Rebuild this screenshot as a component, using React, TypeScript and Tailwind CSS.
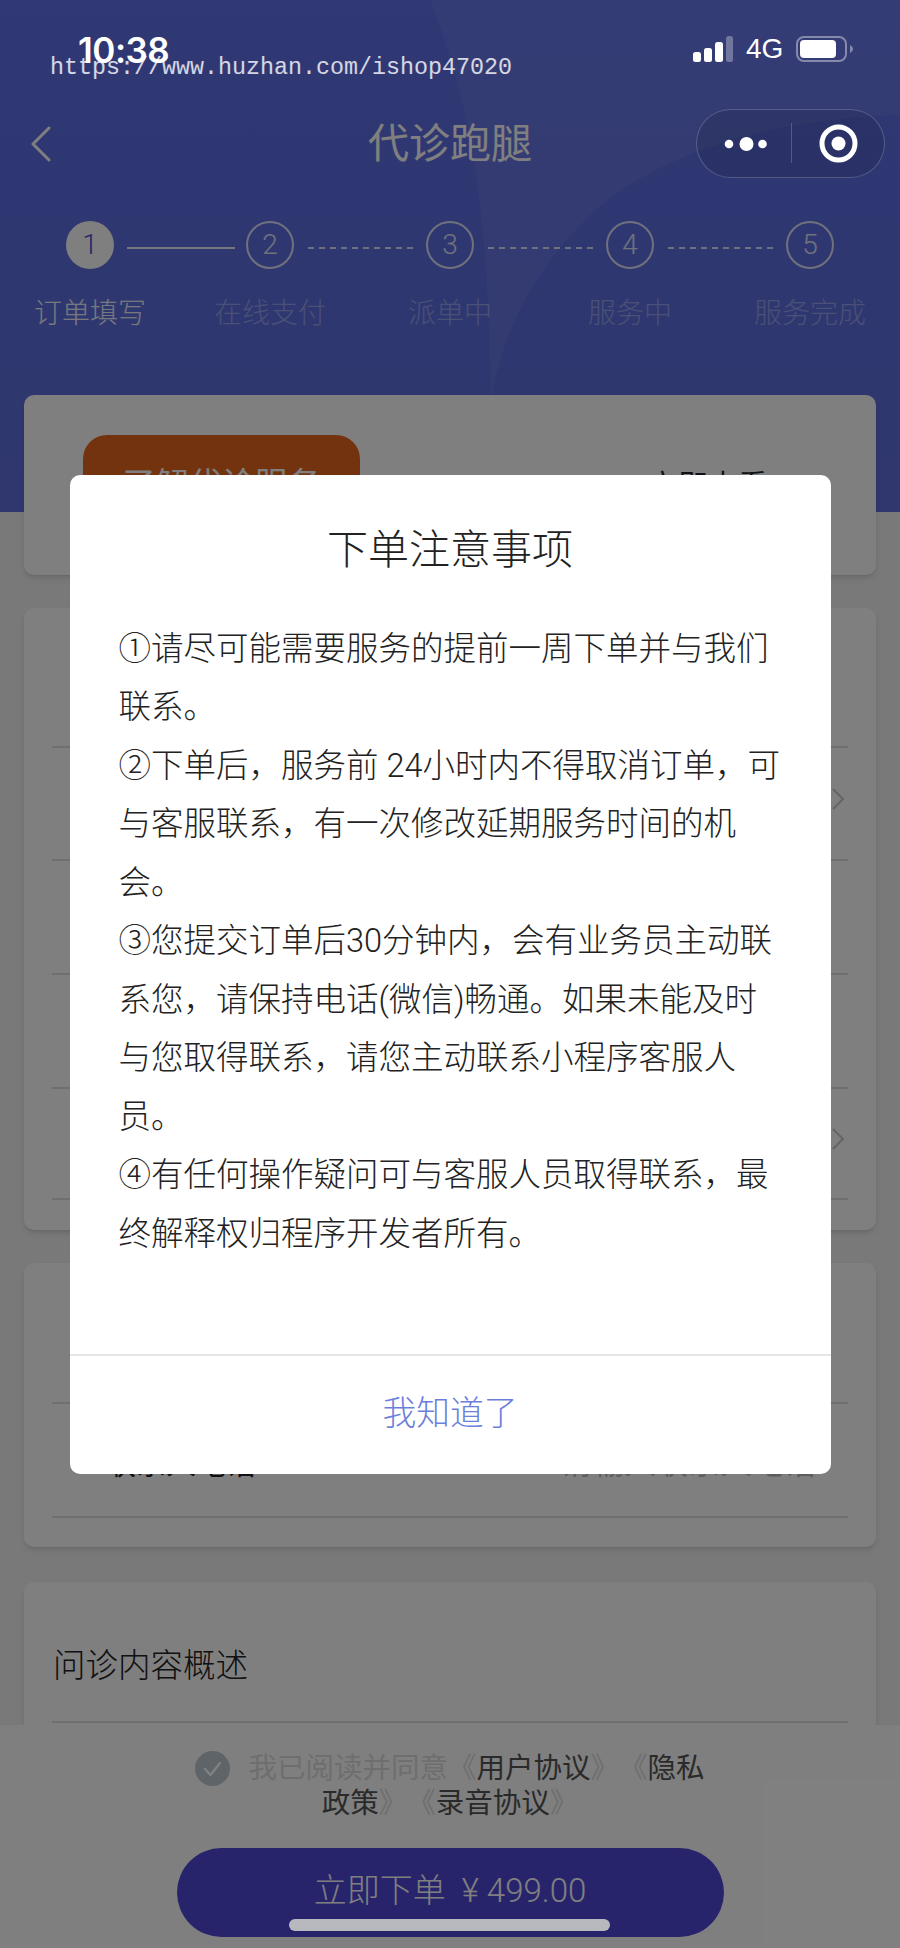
const steps = [
  { n: "1", label: "订单填写", active: true },
  { n: "2", label: "在线支付" },
  { n: "3", label: "派单中" },
  { n: "4", label: "服务中" },
  { n: "5", label: "服务完成" },
];

function Row({ label, value, arrow, h }: { label?: string; value?: string; arrow?: boolean; h: string }) {
  return (
    <div className={`flex items-center justify-between border-b-2 border-[#dedede] ${h}`}>
      <span className="ml-[54px] mt-[6px] text-[30px] text-[#222]">{label}</span>
      {value && <span className="mr-[32px] mt-[6px] text-[32px] text-[#bbb]">{value}</span>}
      {arrow && (
        <svg width="14" height="22" viewBox="0 0 14 22" className="mr-[3px] mb-[10px]" fill="none">
          <path d="M2 1l10 10L2 21" stroke="#c8c8c8" strokeWidth="2" />
        </svg>
      )}
    </div>
  );
}

export default function App() {
  return (
    <div className="relative flex h-[1948px] w-[900px] flex-col overflow-hidden bg-[#f2f2f2] font-['Roboto','Noto_Sans_CJK_SC',sans-serif] [text-spacing-trim:space-all]">
      {/* page under the dialog */}
      <div className="min-h-0 flex-1 overflow-hidden">
        <div className="relative h-[512px] overflow-hidden bg-gradient-to-b from-[#6070ea] to-[#5e6edc] pt-[88px]">
          <svg className="absolute inset-0" width="900" height="512" viewBox="0 0 900 512">
            <path
              d="M430 0L900 0L900 115C780 118 660 150 590 215C540 265 505 320 491 400L491 512C491 300 490 150 430 0Z"
              fill="#fff"
              fillOpacity="0.06"
            />
          </svg>
          <div className="relative grid h-[112px] grid-cols-[1fr_auto_1fr] items-center">
            <svg width="22" height="36" viewBox="0 0 22 36" className="ml-[30px]" fill="none">
              <path d="M19 2L3 18l16 16" stroke="#fff" strokeWidth="3" strokeLinecap="round" strokeLinejoin="round" />
            </svg>
            <div className="text-[41px] leading-none text-white">代诊跑腿</div>
          </div>
          <div className="relative mt-[21px] flex items-center pl-[66px]">
            {steps.map((s, i) => (
              <div key={s.n} className="flex items-center">
                <div
                  className={
                    s.active
                      ? "flex h-[48px] w-[48px] items-center justify-center rounded-full bg-white text-[28px] font-light text-[#4e48d8]"
                      : "flex h-[48px] w-[48px] items-center justify-center rounded-full border-2 border-white/80 text-[28px] font-light text-white/80"
                  }
                >
                  {s.n}
                </div>
                {i < 4 && (
                  <div
                    className={
                      i === 0
                        ? "mt-[6px] ml-[13px] mr-[11px] h-[2px] w-[108px] bg-white/90"
                        : "mt-[6px] ml-[14px] mr-[11px] h-[2px] w-[107px] bg-[repeating-linear-gradient(90deg,rgba(255,255,255,0.8)_0_6px,transparent_6px_11px)]"
                    }
                  />
                )}
              </div>
            ))}
          </div>
          <div className="relative mt-[25px] grid grid-cols-5 text-center text-[28px] font-light leading-[40px]">
            {steps.map((s) => (
              <div key={s.n} className={s.active ? "text-white/90" : "text-white/35"}>
                {s.label}
              </div>
            ))}
          </div>
        </div>

        <div className="relative -mt-[117px] px-[24px]">
          <div className="flex h-[180px] items-center rounded-[10px] bg-white pl-[59px] shadow-md">
            <div className="flex h-[100px] w-[277px] items-center justify-center rounded-[24px] bg-[#e8661f] text-[33px] text-white">
              了解代诊服务
            </div>
            <div className="ml-auto mr-[108px] text-[30px] text-[#222]">立即查看</div>
          </div>

          <div className="mt-[33px] h-[622px] rounded-[10px] bg-white px-[28px] shadow-md">
            <Row h="h-[140px]" />
            <Row h="h-[113px]" arrow />
            <Row h="h-[114px]" />
            <Row h="h-[114px]" />
            <Row h="h-[111px]" arrow />
          </div>

          <div className="mt-[33px] h-[284px] rounded-[10px] bg-white px-[28px] shadow-md">
            <Row h="h-[141px]" />
            <Row h="h-[114px]" label="联系人电话" value="请输入联系人电话" />
          </div>

          <div className="mt-[35px] h-[300px] rounded-[10px] bg-white px-[28px] shadow-md">
            <div className="flex h-[141px] items-center border-b-2 border-[#dedede] pt-[30px] pl-[1px] text-[32.5px] font-light text-[#222]">
              问诊内容概述
            </div>
          </div>
        </div>
      </div>

      <div className="relative h-[223px] shrink-0 bg-white">
        <div className="mx-auto w-[526px] pt-[26px] text-center text-[28.5px] leading-[35px] text-[#ddd]">
          <svg width="35" height="35" viewBox="0 0 35 35" className="mr-[18px] inline-block align-top" fill="none">
            <circle cx="17.5" cy="17.5" r="17.5" fill="#bec9d2" />
            <path d="M10 18l5.5 6L25 12" stroke="#fff" strokeWidth="2.5" strokeLinecap="round" strokeLinejoin="round" />
          </svg>
          我已阅读并同意《<span className="text-[#555]">用户协议</span>》《<span className="text-[#555]">隐私政策</span>》《<span className="text-[#555]">录音协议</span>》
        </div>
        <div className="mx-auto mt-[27px] flex h-[89px] w-[547px] items-center justify-center rounded-full bg-[#4e48d8] pb-[4px] text-[33px] font-light text-white">
          立即下单<span className="ml-[16px]">¥ 499.00</span>
        </div>
      </div>

      {/* dialog */}
      <div className="absolute inset-0 flex items-center justify-center bg-black/50">
        <div className="flex h-[999px] w-[761px] flex-col rounded-[10px] bg-white">
          <div className="pt-[46px] text-center text-[41px] font-light leading-[58px] text-[#222]">下单注意事项</div>
          <div className="mt-[41px] flex-1 pl-[49px] pr-[45px] text-[32.5px] font-light leading-[58.5px] text-[#222]">
            <div>①请尽可能需要服务的提前一周下单并与我们联系。</div>
            <div>②下单后，服务前 24小时内不得取消订单，可与客服联系，有一次修改延期服务时间的机会。</div>
            <div>③您提交订单后30分钟内，会有业务员主动联系您，请保持电话(微信)畅通。如果未能及时与您取得联系，请您主动联系小程序客服人员。</div>
            <div>④有任何操作疑问可与客服人员取得联系，最终解释权归程序开发者所有。</div>
          </div>
          <div className="flex h-[120px] items-center justify-center border-t-2 border-[#e6e6e6] text-[33.75px] font-light text-[#6c7fdc]">
            我知道了
          </div>
        </div>
      </div>

      {/* phone chrome sits above the dim layer */}
      <div className="absolute left-[78px] top-[32px] font-['Inter'] text-[35px] font-semibold leading-[36px] tracking-[-0.5px] text-white">
        10:38
      </div>
      <div className="absolute left-[50px] top-[54px] font-['Liberation_Mono'] text-[23.33px] leading-[28px] text-white/80">
        https://www.huzhan.com/ishop47020
      </div>
      <div className="absolute left-[693px] top-[36px] flex h-[26px] items-center">
        <svg width="41" height="26" viewBox="0 0 41 26" fill="#fff">
          <rect x="0" y="16" width="8" height="10" rx="2.5" />
          <rect x="11" y="12" width="8" height="14" rx="2.5" />
          <rect x="22" y="6" width="8" height="20" rx="2.5" />
          <rect x="33" y="0" width="7" height="26" rx="2.5" fillOpacity="0.3" />
        </svg>
        <span className="ml-[12px] font-['Liberation_Sans'] text-[28px] leading-none text-white">4G</span>
        <svg width="58" height="26" viewBox="0 0 58 26" className="ml-[13px]" fill="none">
          <rect x="1" y="1" width="49" height="24" rx="7" stroke="#fff" strokeOpacity="0.4" strokeWidth="2" />
          <rect x="4" y="4" width="36" height="18" rx="4" fill="#fff" />
          <path d="M54 9c2 1 3 3 3 4s-1 3-3 4z" fill="#fff" fillOpacity="0.4" />
        </svg>
      </div>
      <div className="absolute left-[696px] top-[109px] flex h-[69px] w-[189px] items-center rounded-full border border-white/20 bg-black/10">
        <svg width="187" height="67" viewBox="0 0 187 67">
          <circle cx="32" cy="34" r="4.3" fill="#fff" />
          <circle cx="49.5" cy="34" r="7" fill="#fff" />
          <circle cx="65.5" cy="34" r="4.3" fill="#fff" />
          <path d="M94.5 13v40" stroke="#fff" strokeOpacity="0.2" />
          <circle cx="141.5" cy="33.5" r="16.5" fill="none" stroke="#fff" strokeWidth="5" />
          <circle cx="141.5" cy="33.5" r="7" fill="#fff" />
        </svg>
      </div>
      <div className="absolute bottom-[17px] left-[289px] h-[12px] w-[321px] rounded-full bg-[#b7b9be]" />
    </div>
  );
}
